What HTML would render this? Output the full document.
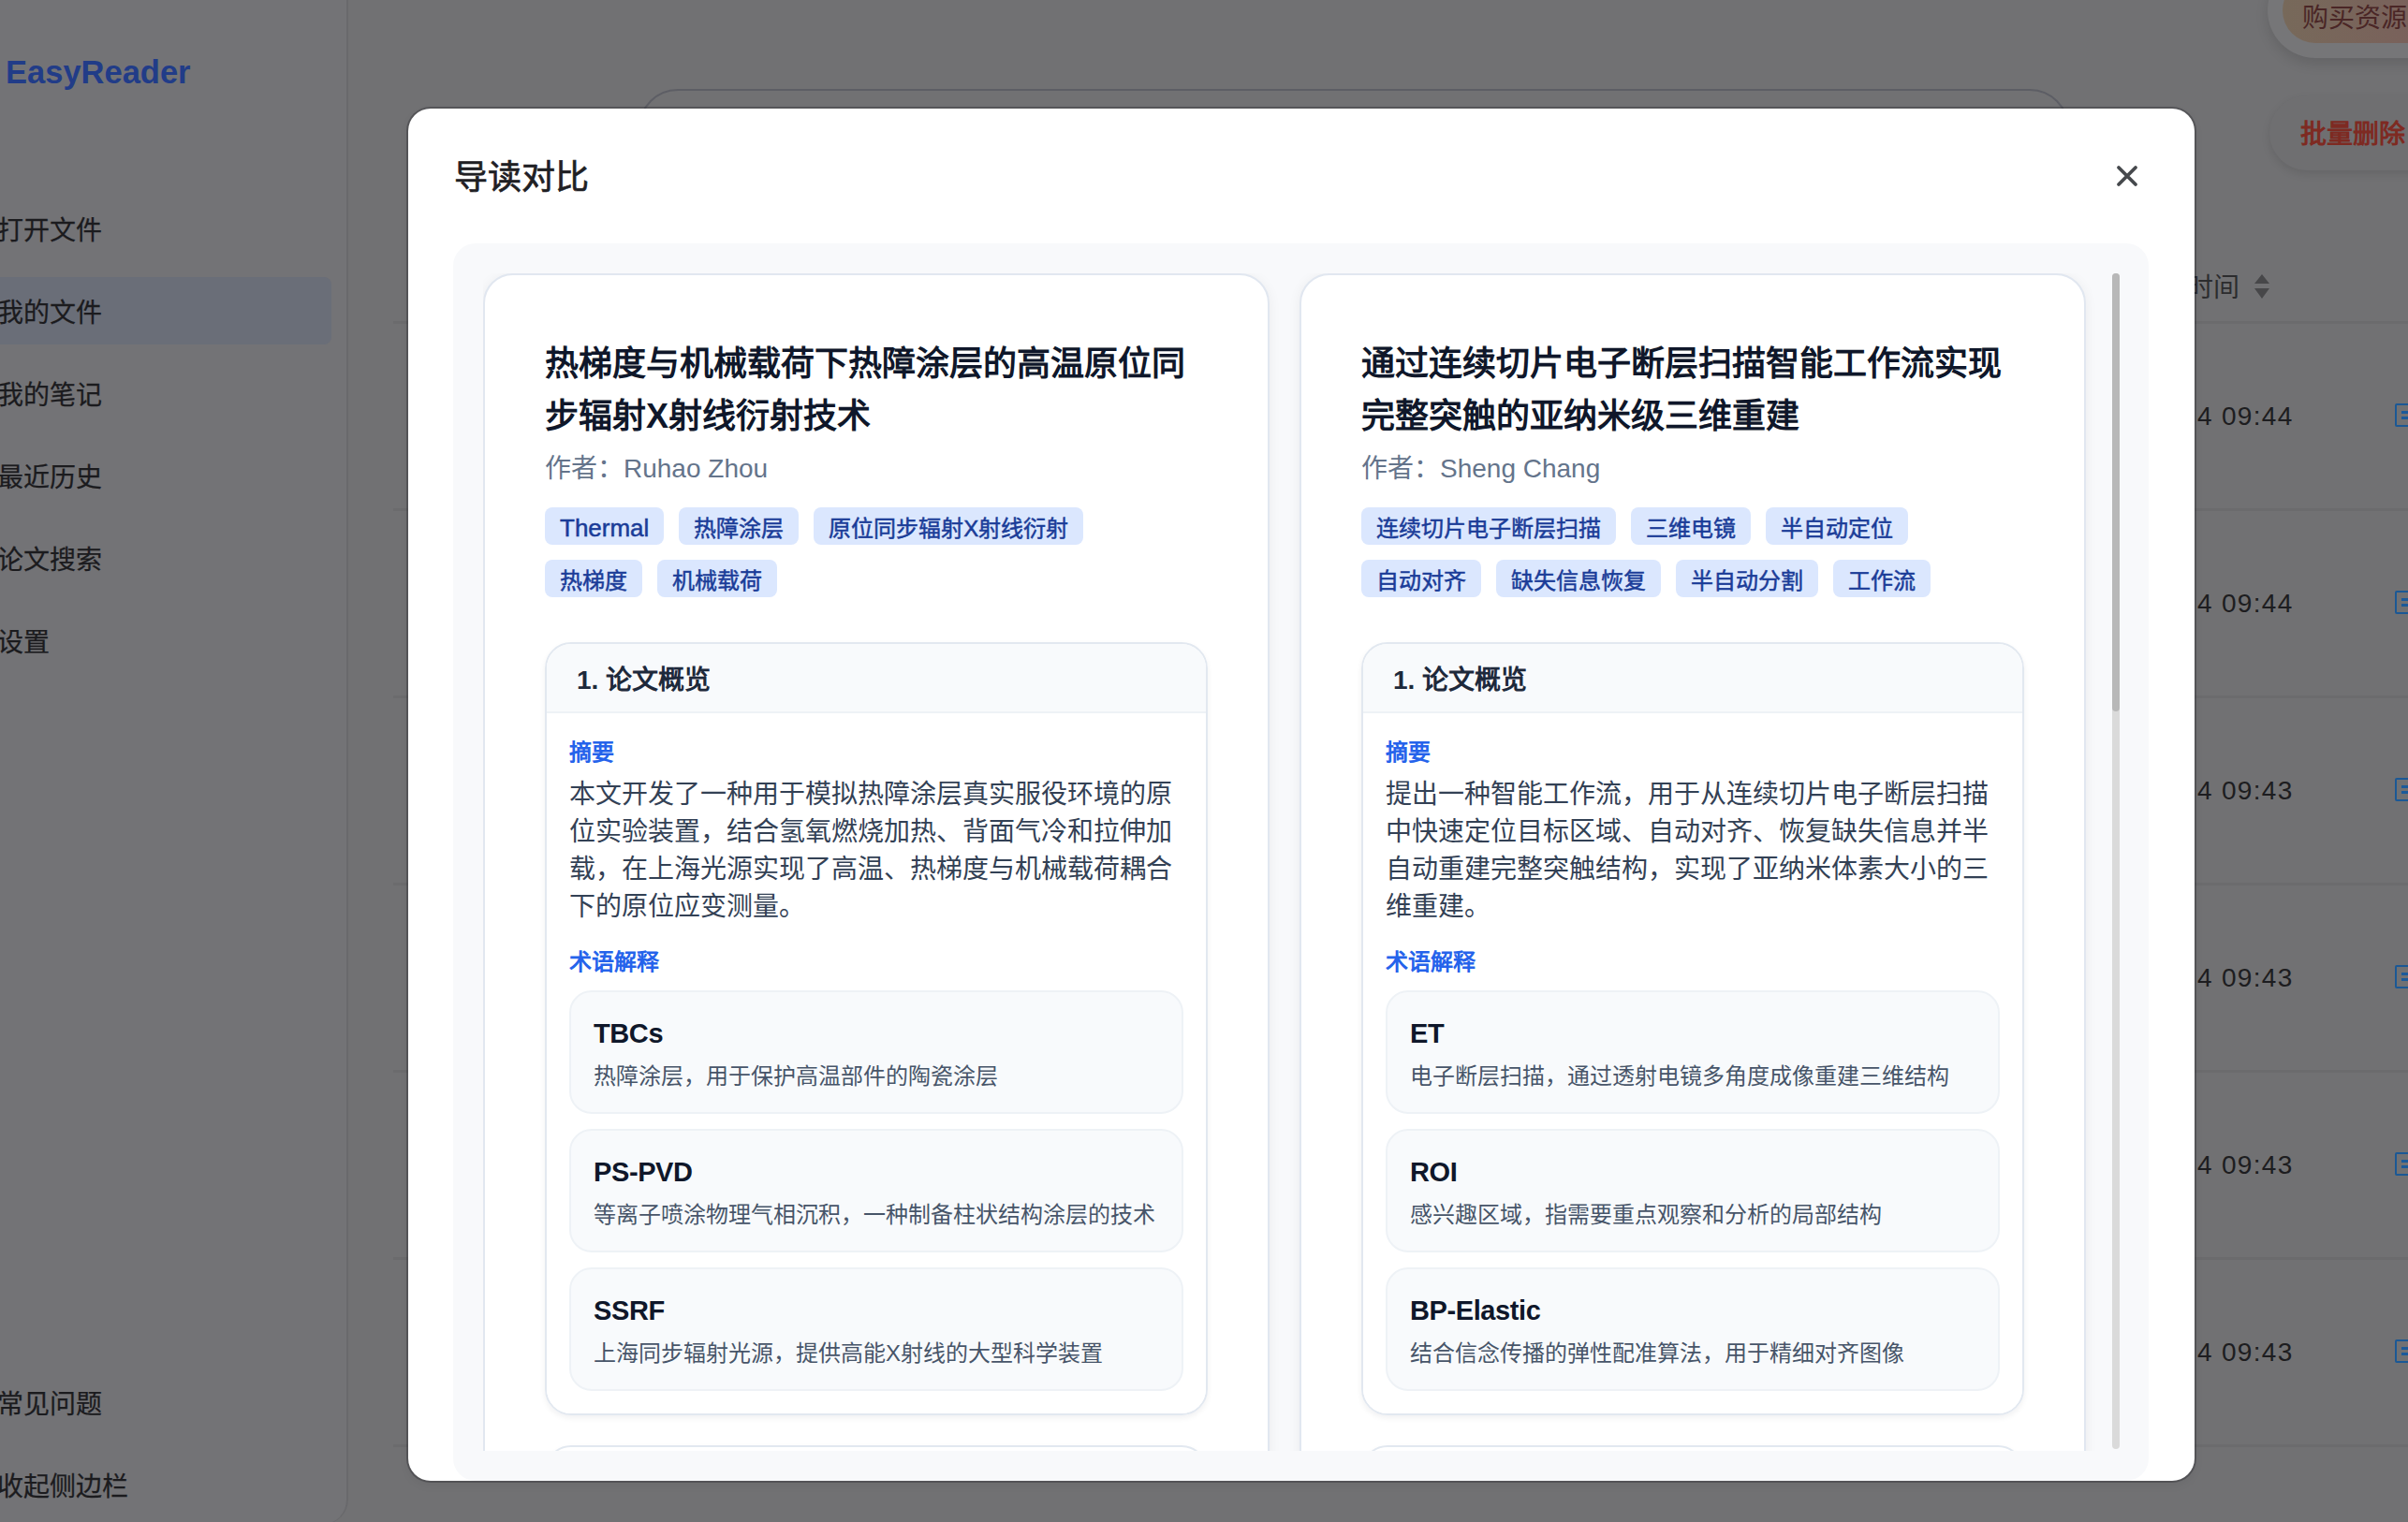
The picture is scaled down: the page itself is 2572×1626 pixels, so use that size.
<!DOCTYPE html>
<html lang="zh-CN">
<head>
<meta charset="utf-8">
<style>
*{box-sizing:border-box;margin:0;padding:0}
html,body{width:2572px;height:1626px;overflow:hidden}
body{position:relative;background:#717173;font-family:"Liberation Sans",sans-serif;}
.abs{position:absolute}
/* sidebar */
.sidebar{position:absolute;left:0;top:0;width:372px;height:1628px;background:#737376;border-right:2px solid #69696c;border-bottom-right-radius:26px}
.logo{position:absolute;left:6px;top:58px;font-size:34.5px;font-weight:bold;color:#213c88;white-space:nowrap}
.nav{position:absolute;left:-3px;font-size:28px;line-height:40px;color:#1b1b1e;white-space:nowrap;-webkit-text-stroke:0.25px #1b1b1e}
.active{position:absolute;left:-20px;top:296px;width:374px;height:72px;background:#6a6e78;border-radius:8px}
/* main */
.search{position:absolute;left:682px;top:95px;width:1528px;height:84px;border:2px solid #5d5e65;border-radius:42px}
.btnbuy{position:absolute;left:2422px;top:-40px;width:240px;height:102px;background:#767678;border-radius:51px;box-shadow:0 6px 14px rgba(0,0,0,.12)}
.btnbuy .in{position:absolute;left:16px;top:16px;width:230px;height:70px;border-radius:35px;background:linear-gradient(90deg,#77695a,#7b5c5c)}
.btnbuy .t{position:absolute;left:37px;top:40px;font-size:28px;line-height:40px;color:#4a2626;white-space:nowrap}
.btndel{position:absolute;left:2424px;top:102px;width:220px;height:80px;background:#6f6f71;border-radius:40px;box-shadow:0 4px 10px rgba(0,0,0,.10)}
.btndel .t{position:absolute;left:33px;top:22px;font-size:28px;line-height:40px;font-weight:bold;color:#7e2a22;white-space:nowrap}
.hline{position:absolute;left:420px;width:2200px;height:3px;background:#6b6b6d}
.th{position:absolute;left:2336px;top:288px;font-size:28px;line-height:40px;color:#2c2c2e;white-space:nowrap}
.time{position:absolute;left:2347px;margin-top:1px;letter-spacing:1.3px;font-size:28px;line-height:40px;color:#1d1d20;white-space:nowrap}
.doc{position:absolute;left:2558px;width:26px;height:25px;border:2.6px solid #1b5895;border-radius:2px}
.doc:before{content:"";position:absolute;left:5px;top:6px;width:20px;height:3px;background:#1c5a9a;box-shadow:0 6px 0 #1c5a9a}
/* modal */
.modal{position:absolute;left:436px;top:116px;width:1908px;height:1466px;background:#fff;border-radius:24px;overflow:hidden;box-shadow:0 0 0 2px rgba(40,40,45,.36),0 4px 12px rgba(0,0,0,.06)}
.mtitle{position:absolute;left:49px;top:50px;font-size:36px;line-height:48px;font-weight:500;color:#1f2024;white-space:nowrap;-webkit-text-stroke:0.7px #1f2024}
.close{position:absolute;left:1820px;top:56px}
.container{position:absolute;left:48px;top:144px;width:1811px;height:1322px;background:#f8f9fb;border-radius:24px}
.scroll{position:absolute;left:32px;top:32px;width:1748px;height:1258px;overflow:hidden}
.track{position:absolute;left:1772px;top:32px;width:8px;height:1256px;background:#dadada;border-radius:4px}
.thumb{position:absolute;left:1772px;top:32px;width:8px;height:468px;background:#b8b8b8;border-radius:4px}
.card{position:absolute;top:0;width:840px;height:1400px;background:#fff;border:2px solid #e1e7f0;border-radius:32px;padding:64px 64px 0 64px;box-shadow:0 2px 14px rgba(15,23,42,.06)}
.c1{left:0}.c2{left:872px}
.ptitle{position:relative;top:3px;font-size:36px;line-height:56px;font-weight:bold;color:#0f172a;white-space:nowrap}
.author{position:relative;top:3px;margin-top:8px;font-size:28px;line-height:40px;color:#64748b;white-space:nowrap}
.tags{margin-top:24px;display:flex;flex-wrap:wrap;gap:16px 16px}
.t2{margin-top:16px}
.tag{height:40px;padding:0 16px;background:#dbe7fe;color:#1a3c98;border-radius:8px;font-size:24px;line-height:45px;font-weight:500;white-space:nowrap;-webkit-text-stroke:0.5px #1a3c98}
.sec{margin-top:48px;border:2px solid #e2e8f0;border-radius:28px;overflow:hidden;box-shadow:0 3px 6px rgba(15,23,42,.06)}
.sech{background:#f8fafc;border-bottom:2px solid #eef2f6;padding:19px 32px 13px;font-size:28px;line-height:40px;font-weight:bold;color:#1e293b;white-space:nowrap}
.secb{background:#fff;padding:24px 24px 24px 24px}
.lab{position:relative;top:2px;font-size:24px;line-height:32px;font-weight:bold;color:#2563eb;white-space:nowrap}
.body{position:relative;top:3px;margin-top:8px;font-size:28px;line-height:40px;color:#334155;white-space:nowrap}
.lab2{margin-top:24px}
.terms{margin-top:16px}
.term{background:#f8fafc;border:2px solid #eef2f6;border-radius:24px;padding:24px 24px 24px 24px;margin-bottom:16px;height:132px}
.term:last-child{margin-bottom:0}
.tn{position:relative;top:2px;letter-spacing:-0.4px;font-size:29px;line-height:36px;font-weight:bold;color:#0f172a;white-space:nowrap}
.td{margin-top:14px;font-size:24px;line-height:32px;color:#475569;white-space:nowrap}
.sec2{margin-top:32px;height:200px}
</style>
</head>
<body>
<div class="sidebar">
  <div class="logo">EasyReader</div>
  <div class="active"></div>
  <div class="nav" style="top:227px">打开文件</div>
  <div class="nav" style="top:315px">我的文件</div>
  <div class="nav" style="top:403px">我的笔记</div>
  <div class="nav" style="top:491px">最近历史</div>
  <div class="nav" style="top:579px">论文搜索</div>
  <div class="nav" style="top:667px">设置</div>
  <div class="nav" style="top:1481px">常见问题</div>
  <div class="nav" style="top:1569px">收起侧边栏</div>
</div>

<div class="search"></div>
<div class="btnbuy"><div class="in"></div><div class="t">购买资源</div></div>
<div class="btndel"><div class="t">批量删除</div></div>

<div class="th">时间</div>
<svg class="abs" style="left:2406px;top:292px" width="20" height="28" viewBox="0 0 20 28"><path d="M10 1 L18 11 L2 11 Z M2 16 L18 16 L10 27 Z" fill="#474749"/></svg>
<div class="hline" style="top:343px"></div>
<div class="hline" style="top:543px"></div>
<div class="hline" style="top:743px"></div>
<div class="hline" style="top:943px"></div>
<div class="hline" style="top:1143px"></div>
<div class="hline" style="top:1343px"></div>
<div class="hline" style="top:1543px"></div>
<div class="time" style="top:424px">4 09:44</div>
<div class="time" style="top:624px">4 09:44</div>
<div class="time" style="top:824px">4 09:43</div>
<div class="time" style="top:1024px">4 09:43</div>
<div class="time" style="top:1224px">4 09:43</div>
<div class="time" style="top:1424px">4 09:43</div>
<div class="doc" style="top:431px"></div>
<div class="doc" style="top:631px"></div>
<div class="doc" style="top:831px"></div>
<div class="doc" style="top:1031px"></div>
<div class="doc" style="top:1231px"></div>
<div class="doc" style="top:1431px"></div>

<div class="modal">
  <div class="mtitle">导读对比</div>
  <svg class="close" width="32" height="32" viewBox="0 0 32 32"><path d="M7 7 L25 25 M25 7 L7 25" stroke="#46494d" stroke-width="3.8" stroke-linecap="round"/></svg>
  <div class="container">
    <div class="scroll">
      <div class="card c1">
        <div class="ptitle">热梯度与机械载荷下热障涂层的高温原位同<br>步辐射X射线衍射技术</div>
        <div class="author">作者：Ruhao Zhou</div>
        <div class="tags">
          <span class="tag" style="font-size:26px">Thermal</span><span class="tag">热障涂层</span><span class="tag">原位同步辐射X射线衍射</span></div><div class="tags t2"><span class="tag">热梯度</span><span class="tag">机械载荷</span>
        </div>
        <div class="sec">
          <div class="sech">1. 论文概览</div>
          <div class="secb">
            <div class="lab">摘要</div>
            <div class="body">本文开发了一种用于模拟热障涂层真实服役环境的原<br>位实验装置，结合氢氧燃烧加热、背面气冷和拉伸加<br>载，在上海光源实现了高温、热梯度与机械载荷耦合<br>下的原位应变测量。</div>
            <div class="lab lab2">术语解释</div>
            <div class="terms">
              <div class="term"><div class="tn">TBCs</div><div class="td">热障涂层，用于保护高温部件的陶瓷涂层</div></div>
              <div class="term"><div class="tn">PS-PVD</div><div class="td">等离子喷涂物理气相沉积，一种制备柱状结构涂层的技术</div></div>
              <div class="term"><div class="tn">SSRF</div><div class="td">上海同步辐射光源，提供高能X射线的大型科学装置</div></div>
            </div>
          </div>
        </div>
        <div class="sec sec2"></div>
      </div>
      <div class="card c2">
        <div class="ptitle">通过连续切片电子断层扫描智能工作流实现<br>完整突触的亚纳米级三维重建</div>
        <div class="author">作者：Sheng Chang</div>
        <div class="tags">
          <span class="tag">连续切片电子断层扫描</span><span class="tag">三维电镜</span><span class="tag">半自动定位</span><span class="tag">自动对齐</span><span class="tag">缺失信息恢复</span><span class="tag">半自动分割</span><span class="tag">工作流</span>
        </div>
        <div class="sec">
          <div class="sech">1. 论文概览</div>
          <div class="secb">
            <div class="lab">摘要</div>
            <div class="body">提出一种智能工作流，用于从连续切片电子断层扫描<br>中快速定位目标区域、自动对齐、恢复缺失信息并半<br>自动重建完整突触结构，实现了亚纳米体素大小的三<br>维重建。</div>
            <div class="lab lab2">术语解释</div>
            <div class="terms">
              <div class="term"><div class="tn">ET</div><div class="td">电子断层扫描，通过透射电镜多角度成像重建三维结构</div></div>
              <div class="term"><div class="tn">ROI</div><div class="td">感兴趣区域，指需要重点观察和分析的局部结构</div></div>
              <div class="term"><div class="tn">BP-Elastic</div><div class="td">结合信念传播的弹性配准算法，用于精细对齐图像</div></div>
            </div>
          </div>
        </div>
        <div class="sec sec2"></div>
      </div>
    </div>
    <div class="track"></div>
    <div class="thumb"></div>
  </div>
</div>
</body>
</html>
